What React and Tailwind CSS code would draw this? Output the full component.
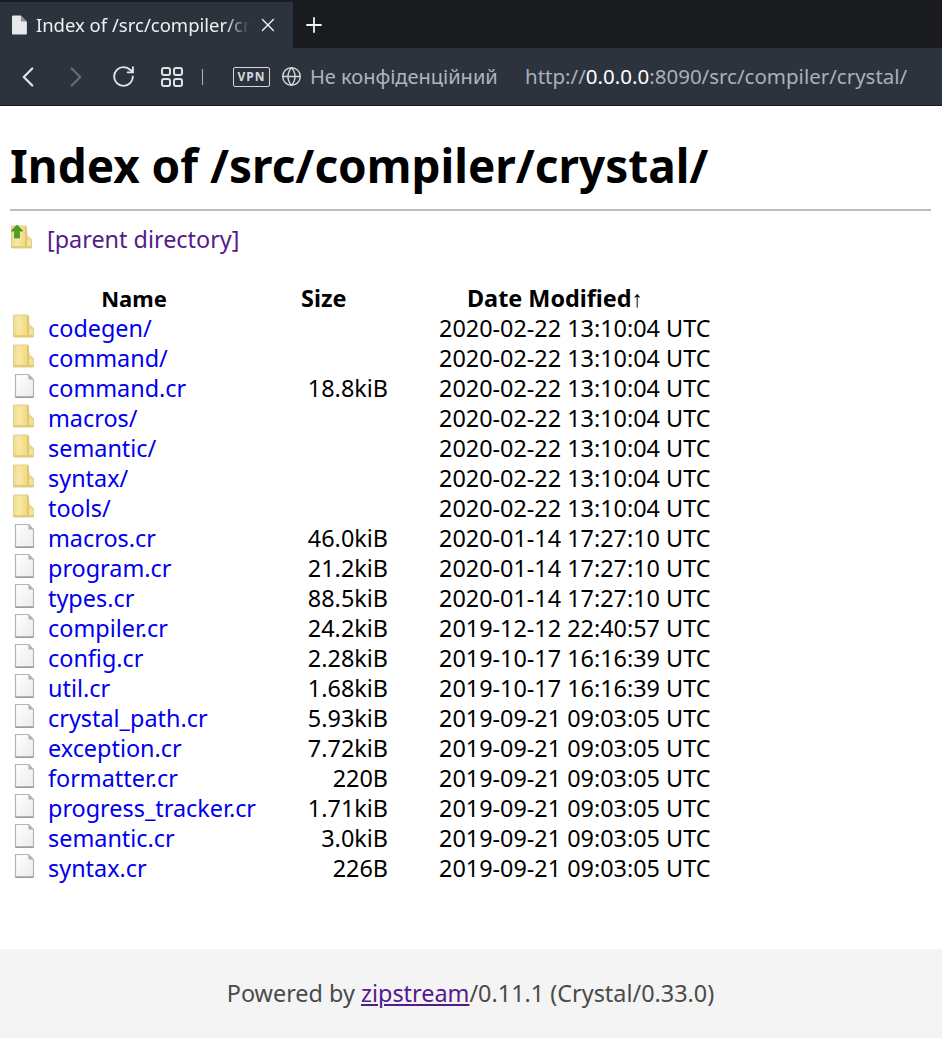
import { ChevronLeft, ChevronRight, RotateCw, Globe, X, Plus } from 'lucide-react';

const rows = [
  ['dir', 'codegen/', '', '2020-02-22 13:10:04 UTC'],
  ['dir', 'command/', '', '2020-02-22 13:10:04 UTC'],
  ['file', 'command.cr', '18.8kiB', '2020-02-22 13:10:04 UTC'],
  ['dir', 'macros/', '', '2020-02-22 13:10:04 UTC'],
  ['dir', 'semantic/', '', '2020-02-22 13:10:04 UTC'],
  ['dir', 'syntax/', '', '2020-02-22 13:10:04 UTC'],
  ['dir', 'tools/', '', '2020-02-22 13:10:04 UTC'],
  ['file', 'macros.cr', '46.0kiB', '2020-01-14 17:27:10 UTC'],
  ['file', 'program.cr', '21.2kiB', '2020-01-14 17:27:10 UTC'],
  ['file', 'types.cr', '88.5kiB', '2020-01-14 17:27:10 UTC'],
  ['file', 'compiler.cr', '24.2kiB', '2019-12-12 22:40:57 UTC'],
  ['file', 'config.cr', '2.28kiB', '2019-10-17 16:16:39 UTC'],
  ['file', 'util.cr', '1.68kiB', '2019-10-17 16:16:39 UTC'],
  ['file', 'crystal_path.cr', '5.93kiB', '2019-09-21 09:03:05 UTC'],
  ['file', 'exception.cr', '7.72kiB', '2019-09-21 09:03:05 UTC'],
  ['file', 'formatter.cr', '220B', '2019-09-21 09:03:05 UTC'],
  ['file', 'progress_tracker.cr', '1.71kiB', '2019-09-21 09:03:05 UTC'],
  ['file', 'semantic.cr', '3.0kiB', '2019-09-21 09:03:05 UTC'],
  ['file', 'syntax.cr', '226B', '2019-09-21 09:03:05 UTC'],
];

function FolderIcon({ up }) {
  return (
    <svg width="24" height="24" viewBox="0 0 24 24" className="block">
      <defs>
        <linearGradient id="folderFill" x1="0" y1="0" x2="1" y2="0">
          <stop offset="0" stopColor="#ecd98f" />
          <stop offset="0.25" stopColor="#f7e8a4" />
          <stop offset="0.7" stopColor="#f0d97f" />
          <stop offset="1" stopColor="#ecd486" />
        </linearGradient>
      </defs>
      <path d="M1.500 1h14.500l1 9.500 4.500 4v8.500h-20z" fill="url(#folderFill)" stroke="#e0cf92" strokeWidth="1" />
      <path d="M16 2v20" stroke="#d2b868" strokeWidth="1.500" opacity="0.7" />
      <path d="M17 15h4v7h-4z" fill="#f3e29c" />
      <path d="M2 21h19v2h-19z" fill="#e3ca75" />
      {up && <path d="M7 0l6 6h-3.500v7h-5v-7h-3.500z" fill="#4f9e22" stroke="#3a8a1c" strokeWidth="0.600" />}
    </svg>
  );
}

function FileIcon() {
  return (
    <svg width="24" height="24" viewBox="0 0 24 24" className="block">
      <defs>
        <linearGradient id="fileFill" x1="0" y1="0" x2="1" y2="1">
          <stop offset="0" stopColor="#ffffff" />
          <stop offset="1" stopColor="#ececec" />
        </linearGradient>
      </defs>
      <path d="M3.500 .5h13l5 5v17.500h-18z" fill="url(#fileFill)" stroke="#b4b4b4" strokeWidth="1.200" />
      <path d="M16.500 .5v5h5z" fill="#b0b0b0" />
      <path d="M3.500 23.200h18" stroke="#8c8c8c" strokeWidth="1.200" />
    </svg>
  );
}

function TabFile() {
  return (
    <svg width="16" height="20" viewBox="0 0 16 20">
      <path d="M1 1.500a1 1 0 0 1 1-1h8l6 6v12a1 1 0 0 1-1 1h-13a1 1 0 0 1-1-1z" fill="#e8e9eb" />
      <path d="M10 .5v6h6z" fill="#2f3540" opacity="0.5" />
    </svg>
  );
}

function Speed() {
  return (
    <svg width="24" height="22" viewBox="0 0 24 22" fill="none" stroke="#dfe2e6" strokeWidth="2">
      <rect x="2" y="2" width="8" height="7" rx="2" />
      <rect x="14" y="2" width="8" height="7" rx="2" />
      <rect x="2" y="13" width="8" height="7" rx="2" />
      <rect x="14" y="13" width="8" height="7" rx="2" />
    </svg>
  );
}

export default function App() {
  return (
    <div className="w-[942px] h-[1038px] overflow-hidden bg-white flex flex-col font-['Noto_Sans',sans-serif]">
      {/* browser chrome */}
      <div className="h-[48px] bg-[#191b1f] pt-[2px] flex items-stretch">
        <div className="w-[293px] bg-[#2d333d] flex items-center pl-[11px] pr-[14px]">
          <TabFile />
          <span className="ml-[9px] w-[216px] whitespace-nowrap overflow-hidden text-[18.500px] text-[#eef0f2] [mask-image:linear-gradient(to_right,black_88%,transparent)]">
            Index of /src/compiler/crystal/
          </span>
          <X size={22} strokeWidth={1.500} className="ml-[7px] text-[#f0f1f2]" />
        </div>
        <div className="flex items-center pl-[9px]">
          <Plus size={24} strokeWidth={1.800} className="text-[#f4f5f6]" />
        </div>
      </div>
      <div className="h-[58px] bg-[#2d333d] border-b border-[#15171a] flex items-center whitespace-nowrap">
        <ChevronLeft size={34} strokeWidth={1.600} className="ml-[11px] text-[#e3e5e8]" />
        <ChevronRight size={34} strokeWidth={1.600} className="ml-[14px] text-[#666c75]" />
        <RotateCw size={25} strokeWidth={1.800} className="ml-[18px] text-[#e3e5e8]" />
        <div className="ml-[24px]"><Speed /></div>
        <div className="ml-[18px] w-px h-[16px] bg-[#aeb2b8]" />
        <div className="ml-[30px] w-[37px] h-[20px] border border-[#d5d8db] rounded-[2px] flex items-center justify-center text-[12px] font-bold tracking-[1px] text-[#d5d8db]">VPN</div>
        <Globe size={21} strokeWidth={1.600} className="ml-[11px] text-[#d5d8db]" />
        <span className="ml-[8px] w-[215px] text-[20px] text-[#b0b5bc]">Не конфіденційний</span>
        <span className="text-[20.500px] text-[#a9b0ba]">
          http://<span className="text-white">0.0.0.0</span>:8090/src/compiler/crystal/
        </span>
      </div>

      {/* listing */}
      <main className="flex-1 px-[10px]">
        <h1 className="mt-[29px] h-[60px] text-[45.900px] leading-[60px] font-bold text-black whitespace-nowrap">
          Index of /src/compiler/crystal/
        </h1>
        <hr className="mt-[14px] w-[921px] border-t-2 border-[#bdbdbd]" />
        <div className="mt-[13px] h-[30px] flex items-start pt-[1px] text-[23.400px] text-[#551a8b]">
          <FolderIcon up />
          <a href="#" className="ml-[13px] -mt-[1px] leading-[30px]">[parent directory]</a>
        </div>

        <div className="mt-[29px] grid grid-cols-[38px_210px_130px_auto] justify-start text-[23.400px] leading-[30px] text-black">
          <div className="col-span-2 text-center font-bold text-[22px]">Name</div>
          <div className="pl-[43px] font-bold">Size</div>
          <div className="pl-[79px] font-bold whitespace-nowrap">Date Modified↑</div>
          {rows.map(([type, name, size, date]) => (
            <div key={name} className="contents">
              <div className="flex items-start pl-[2px] pt-[1px]">
                {type === 'dir' ? <FolderIcon /> : <FileIcon />}
              </div>
              <a href="#" className="text-[#0000ee] whitespace-nowrap">{name}</a>
              <div className="text-right">{size}</div>
              <div className="pl-[51px] whitespace-nowrap">{date}</div>
            </div>
          ))}
        </div>
      </main>

      <footer className="h-[89px] bg-[#f4f4f4] flex items-center justify-center pr-[1px] text-[23.400px] text-[#4a4a4a]">
        <span>
          Powered by <a href="#" className="text-[#551a8b] underline">zipstream</a>/0.11.1 (Crystal/0.33.0)
        </span>
      </footer>
    </div>
  );
}
